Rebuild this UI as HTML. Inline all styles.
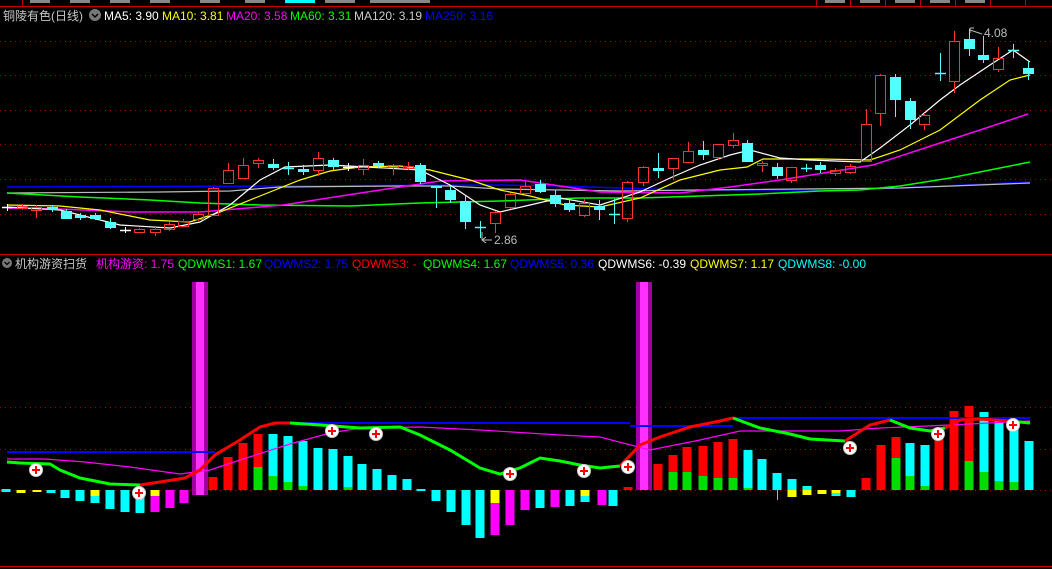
<!DOCTYPE html>
<html><head><meta charset="utf-8">
<style>
html,body{margin:0;padding:0;background:#000;width:1052px;height:569px;overflow:hidden}
svg{display:block}
text{font-family:"Liberation Sans","Noto Sans CJK SC",sans-serif;font-size:12px}
</style></head><body>
<svg id="s" width="1052" height="569" xmlns="http://www.w3.org/2000/svg">
<rect width="1052" height="569" fill="#000"/>
<g stroke="#c00000" stroke-width="1">
<line x1="0" y1="6.5" x2="1052" y2="6.5"/>
<line x1="22.5" y1="0" x2="22.5" y2="6"/><line x1="816.5" y1="0" x2="816.5" y2="6"/><line x1="850.5" y1="0" x2="850.5" y2="6"/><line x1="885.5" y1="0" x2="885.5" y2="6"/><line x1="920.5" y1="0" x2="920.5" y2="6"/><line x1="955.5" y1="0" x2="955.5" y2="6"/><line x1="990.5" y1="0" x2="990.5" y2="6"/><line x1="1025.5" y1="0" x2="1025.5" y2="6"/>
</g>
<g fill="#888"><rect x="30" y="0" width="20" height="3"/><rect x="70" y="0" width="20" height="3"/><rect x="110" y="0" width="20" height="3"/><rect x="150" y="0" width="20" height="3"/><rect x="200" y="0" width="20" height="3"/><rect x="245" y="0" width="20" height="3"/><rect x="285" y="0" width="30" height="3" fill="#0ff"/><rect x="325" y="0" width="30" height="3"/><rect x="370" y="0" width="60" height="3"/><rect x="825" y="0" width="20" height="3"/><rect x="860" y="0" width="20" height="3"/><rect x="895" y="0" width="20" height="3"/><rect x="930" y="0" width="20" height="3"/><rect x="965" y="0" width="20" height="3"/></g>
<g stroke="#a00000" stroke-width="1" stroke-dasharray="1,4">
<line x1="0" y1="41.5" x2="1052" y2="41.5"/><line x1="0" y1="75.5" x2="1052" y2="75.5"/><line x1="0" y1="110.5" x2="1052" y2="110.5"/><line x1="0" y1="144.5" x2="1052" y2="144.5"/><line x1="0" y1="179.5" x2="1052" y2="179.5"/><line x1="0" y1="214.5" x2="1052" y2="214.5"/>
<line x1="0" y1="407.5" x2="1052" y2="407.5"/><line x1="0" y1="449.5" x2="1052" y2="449.5"/><line x1="0" y1="490.5" x2="1052" y2="490.5"/>
</g>
<line x1="0" y1="254.5" x2="1052" y2="254.5" stroke="#c00000"/>
<line x1="0" y1="566.5" x2="1052" y2="566.5" stroke="#c00000"/>
<g id="top"></g>
<g id="bot"></g>
<text x="3" y="20" fill="#c8c8c8" font-size="13">铜陵有色(日线)</text>
<circle cx="95" cy="15" r="6" fill="#777"/><path d="M92 14l3 3 3-3" stroke="#000" stroke-width="1.5" fill="none"/>
<text x="104" y="20" fill="#fff">MA5: 3.90</text>
<text x="162" y="20" fill="#ff0">MA10: 3.81</text>
<text x="226" y="20" fill="#f0f">MA20: 3.58</text>
<text x="290" y="20" fill="#0f0">MA60: 3.31</text>
<text x="354" y="20" fill="#ccc">MA120: 3.19</text>
<text x="425" y="20" fill="#00f">MA250: 3.16</text>
<circle cx="7" cy="263" r="5" fill="#777"/><path d="M4.5 262l2.5 2.5 2.5-2.5" stroke="#000" stroke-width="1.3" fill="none"/>
<text x="15" y="268" fill="#c8c8c8">机构游资扫货</text>
<text x="96" y="268" fill="#f0f">机构游资: 1.75</text>
<text x="178" y="268" fill="#0f0">QDWMS1: 1.67</text>
<text x="264" y="268" fill="#00f">QDWMS2: 1.75</text>
<text x="352" y="268" fill="#f00">QDWMS3: -</text>
<text x="423" y="268" fill="#0f0">QDWMS4: 1.67</text>
<text x="510" y="268" fill="#00f">QDWMS5: 0.36</text>
<text x="598" y="268" fill="#fff">QDWMS6: -0.39</text>
<text x="690" y="268" fill="#ff0">QDWMS7: 1.17</text>
<text x="778" y="268" fill="#0ff">QDWMS8: -0.00</text>
<text x="984" y="37" fill="#bbb">4.08</text>
<path d="M970 28v5M970 28h4M970 30l12 4" stroke="#bbb" fill="none"/>
<text x="494" y="244" fill="#bbb">2.86</text>
<path d="M482 232v8h10M482 240l4-3M482 240l4 3" stroke="#bbb" fill="none"/>
</svg>
<script>
var NS="http://www.w3.org/2000/svg";
function el(p,t,a){var e=document.createElementNS(NS,t);for(var k in a)e.setAttribute(k,a[k]);p.appendChild(e);return e;}
var T=document.getElementById("top"),B=document.getElementById("bot");
function pl(g,pts,c,w){el(g,"polyline",{points:pts.map(function(p){return p.join(",")}).join(" "),stroke:c,"stroke-width":w||1,fill:"none"});}
pl(T,[[7,187],[280,186],[500,185],[560,186],[620,188],[680,190],[800,190],[900,188],[1030,182]],"#00f",1.5);
pl(T,[[7,193],[160,192],[230,191],[280,187],[400,186],[450,186],[500,189],[560,190],[620,191],[700,190],[900,188],[1030,183]],"#bbb",1.2);
pl(T,[[7,193],[80,197],[150,200],[200,203],[260,205],[350,206],[420,203],[500,201],[580,198],[640,198],[700,196],[760,194],[820,191],[860,190],[900,186],[950,178],[1000,168],[1030,162]],"#0f0",1.5);
pl(T,[[7,208],[60,209],[130,212],[200,212],[283,205],[367,192],[400,187],[440,181],[520,180],[560,186],[600,192],[680,193],[730,187],[780,180],[830,172],[873,165],[940,143],[980,130],[1028,114]],"#f0f",1.5);
pl(T,[[7,205],[60,206],[100,210],[150,220],[190,222],[220,212],[260,196],[300,180],[330,171],[360,167],[400,166],[430,170],[470,180],[500,190],[530,196],[565,205],[600,207],[640,198],[680,180],[720,170],[747,167],[763,159],[820,159],[870,160],[900,150],[940,130],[980,100],[1010,80],[1030,75]],"#ff0",1.2);
pl(T,[[7,207],[60,210],[120,225],[170,228],[200,222],[230,205],[260,180],[285,167],[330,165],[420,170],[450,185],[480,205],[500,212],[530,205],[560,198],[600,205],[640,192],[670,178],[700,165],[730,155],[750,150],[780,158],[810,160],[860,162],[880,148],[910,125],[940,100],[960,85],[990,65],[1013,50],[1030,62]],"#fff",1.2);
var C=[[7,207,207,204,211,"w"],[22,206,208,204,210,"r"],[36,207,210,205,218,"r"],[52,207,210,205,212,"c"],[66,211,219,209,219,"c"],[80,215,218,213,220,"c"],[95,215,219,213,220,"c"],[110,222,228,218,229,"c"],[125,230,230,227,233,"w"],[139,229,232,228,233,"r"],[155,229,232,227,236,"r"],[169,224,229,222,231,"r"],[183,221,226,219,227,"r"],[198,214,219,212,221,"r"],[213,188,215,187,215,"r"],[228,170,183,163,184,"r"],[243,165,178,158,178,"r"],[258,160,163,158,168,"r"],[273,164,168,159,170,"c"],[288,168,168,162,175,"x"],[303,169,172,165,175,"c"],[318,158,170,152,176,"r"],[333,160,167,158,170,"c"],[348,167,167,163,171,"w"],[363,165,169,159,175,"r"],[378,163,166,161,168,"c"],[393,165,167,164,175,"r"],[408,166,168,162,170,"r"],[420,165,182,163,184,"c"],[436,186,187,186,208,"c"],[450,190,200,186,203,"c"],[465,201,222,196,229,"c"],[480,227,227,221,238,"x"],[495,212,223,211,233,"r"],[510,194,207,193,209,"r"],[525,186,193,181,195,"r"],[540,184,192,180,193,"c"],[555,195,204,190,207,"c"],[569,203,210,198,212,"c"],[584,203,215,199,217,"r"],[599,206,210,200,220,"c"],[614,214,214,199,224,"x"],[627,182,218,181,222,"r"],[643,167,182,166,186,"r"],[658,168,171,153,178,"c"],[673,158,168,158,180,"r"],[688,151,162,142,163,"r"],[703,150,155,141,160,"c"],[718,144,157,144,160,"r"],[733,140,145,133,148,"r"],[747,143,162,140,162,"c"],[762,163,165,161,172,"r"],[777,167,176,163,179,"c"],[791,167,180,167,183,"r"],[806,168,168,164,172,"x"],[820,165,170,162,173,"c"],[835,170,173,168,176,"r"],[850,166,172,164,174,"r"],[866,124,161,109,161,"r"],[880,75,113,74,126,"r"],[895,77,100,74,117,"c"],[910,101,120,98,129,"c"],[924,115,124,113,130,"r"],[940,73,76,53,81,"x"],[954,41,81,31,93,"r"],[969,39,49,29,56,"c"],[983,55,60,36,63,"c"],[998,58,69,47,72,"r"],[1013,50,50,44,58,"x"],[1028,68,74,62,80,"c"]];
C.forEach(function(d){var x=d[0],t=d[1],b=d[2],h=d[3],l=d[4],k=d[5];
 if(k=="r"){el(T,"line",{x1:x+.5,y1:h,x2:x+.5,y2:t,stroke:"#ff3232"});el(T,"line",{x1:x+.5,y1:b,x2:x+.5,y2:l,stroke:"#ff3232"});el(T,"rect",{x:x-4.5,y:t+.5,width:10,height:Math.max(b-t,1),fill:"none",stroke:"#ff3232"});}
 else if(k=="c"){el(T,"line",{x1:x+.5,y1:h,x2:x+.5,y2:l,stroke:"#54ffff"});el(T,"rect",{x:x-5,y:t,width:11,height:Math.max(b-t,2),fill:"#54ffff"});}
 else{var c=k=="w"?"#fff":"#54ffff";el(T,"line",{x1:x+.5,y1:h,x2:x+.5,y2:l,stroke:c});el(T,"line",{x1:x-5,y1:t+.5,x2:x+6,y2:t+.5,stroke:c,"stroke-width":1.5});}
});
var Y="#ff0",Cy="#0ff",M="#f0f",R="#f00",G="#0d0";
var Bs=[[6,[[489,492,Cy]]],[21,[[490,493,Y]]],[37,[[490,492,Y]]],[51,[[490,493,Cy]]],[65,[[490,498,Cy]]],[80,[[490,501,Cy]]],[95,[[490,496,Y],[496,503,Cy]]],[110,[[490,509,Cy]]],[125,[[490,512,Cy]]],[140,[[490,498,Y],[498,513,Cy]]],[155,[[490,496,Y],[496,512,M]]],[170,[[490,508,M]]],[184,[[490,503,M]]],
[213,[[477,490,R]]],[228,[[457,490,R]]],[243,[[443,490,R]]],[258,[[434,467,R],[467,490,G]]],[273,[[434,476,Cy],[476,490,G]]],[288,[[436,482,Cy],[482,490,G]]],[303,[[441,486,Cy],[486,490,G]]],[318,[[448,490,Cy]]],[333,[[449,490,Cy]]],[348,[[456,487,Cy],[487,490,G]]],[362,[[464,490,Cy]]],[377,[[469,490,Cy]]],[392,[[475,490,Cy]]],[407,[[479,490,Cy]]],[421,[[489,491,Cy]]],[436,[[490,501,Cy]]],[451,[[490,512,Cy]]],[466,[[490,525,Cy]]],[480,[[490,538,Cy]]],[495,[[490,503,Y],[503,535,M]]],[510,[[490,525,M]]],[525,[[490,510,M]]],[540,[[490,508,Cy]]],[555,[[490,507,M]]],[570,[[490,506,Cy]]],[585,[[490,496,Y],[496,502,Cy]]],[602,[[490,505,M]]],[613,[[490,506,Cy]]],[628,[[487,490,R]]],
[658,[[464,490,R]]],[673,[[455,472,R],[472,490,G]]],[687,[[447,472,R],[472,490,G]]],[703,[[446,476,R],[476,490,G]]],[718,[[442,478,R],[478,490,G]]],[733,[[439,478,R],[478,490,G]]],[748,[[450,488,Cy],[488,490,G]]],[762,[[459,490,Cy]]],[777,[[473,490,Cy]]],[792,[[479,490,Cy],[490,497,Y]]],[807,[[486,490,Cy],[490,495,Y]]],[822,[[490,494,Y]]],[836,[[490,493,Y],[493,496,Cy]]],[851,[[490,497,Cy]]],[866,[[478,490,R]]],[881,[[445,490,R]]],[896,[[437,458,R],[458,490,G]]],[910,[[443,476,Cy],[476,490,G]]],[925,[[445,486,Cy],[486,490,G]]],[939,[[432,490,R]]],[954,[[411,490,R]]],[969,[[406,461,R],[461,490,G]]],[984,[[412,472,Cy],[472,490,G]]],[999,[[418,481,Cy],[481,490,G]]],[1014,[[425,482,Cy],[482,490,G]]],[1029,[[441,490,Cy]]]];
Bs.forEach(function(b){b[1].forEach(function(s){el(B,"rect",{x:b[0]-4.5,y:s[0],width:9,height:s[1]-s[0],fill:s[2]});});});
el(B,"line",{x1:777.5,y1:490,x2:777.5,y2:500,stroke:Cy});
[[192,282,495],[636,282,490]].forEach(function(b){el(B,"rect",{x:b[0],y:b[1],width:16,height:b[2]-b[1],fill:"#a000a0"});el(B,"rect",{x:b[0]+4,y:b[1],width:8,height:b[2]-b[1],fill:"#ff30ff"});});
pl(B,[[7,452],[215,452]],"#00f",2);pl(B,[[285,423],[630,423]],"#00f",2);pl(B,[[630,426],[733,426]],"#00f",2);pl(B,[[733,418],[1030,418]],"#00f",2);
pl(B,[[7,459],[45,459],[85,462],[130,467],[180,474],[210,470],[240,460],[290,444],[330,433],[360,428],[420,427],[480,430],[560,435],[600,437],[650,450],[700,440],[740,431],[840,431],[880,428],[950,425],[1030,421]],"#f0f",1.2);
pl(B,[[7,462],[20,463],[50,464],[60,470],[80,478],[110,484],[140,485]],"#0f0",3);
pl(B,[[140,485],[160,482],[185,478],[200,470],[215,455],[240,440],[260,427],[275,423],[290,423]],"#f00",3);
pl(B,[[290,423],[320,425],[360,428],[400,427],[420,435],[450,450],[480,468],[500,474],[520,468],[540,458],[560,461],[580,465],[600,468],[620,466]],"#0f0",3);
pl(B,[[620,466],[640,445],[660,437],[690,427],[720,421],[733,418]],"#f00",3);
pl(B,[[733,418],[760,428],[790,434],[810,439],[845,441]],"#0f0",3);
pl(B,[[845,441],[870,425],[890,420]],"#f00",3);
pl(B,[[890,420],[910,428],[930,431],[945,428]],"#0f0",3);
pl(B,[[945,428],[960,420],[980,419],[1010,421]],"#f00",3);
pl(B,[[1010,421],[1030,423]],"#0f0",3);
[[36,470],[139,493],[332,431],[376,434],[510,474],[584,471],[628,467],[850,448],[938,434],[1013,425]].forEach(function(p){
 el(B,"circle",{cx:p[0],cy:p[1],r:6.5,fill:"#fff",stroke:"#ccc"});
 el(B,"path",{d:"M"+(p[0]-4)+" "+p[1]+"h8M"+p[0]+" "+(p[1]-4)+"v8",stroke:"#f00","stroke-width":2});});
</script>
</body></html>
